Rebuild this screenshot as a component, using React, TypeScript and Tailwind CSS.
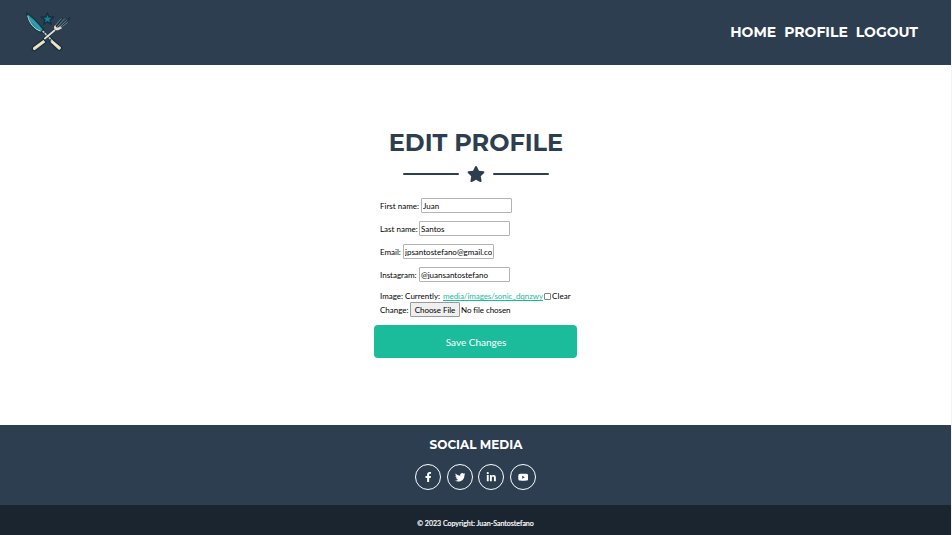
import React from "react";
import { FaFacebookF, FaTwitter, FaLinkedinIn, FaYoutube, FaStar } from "react-icons/fa";

const heading = "font-['Montserrat','Inter',sans-serif] font-bold whitespace-nowrap";

function Logo() {
  return (
    <svg className="h-[70px] w-20" viewBox="0 0 240 210" fill="none">
      <g stroke="#14303e" strokeLinejoin="round">
        <path d="M50 39 C68 50 86 70 102 90 L95 98 C74 91 56 72 50 39Z" fill="#2593a3" strokeWidth="4" />
        <path d="M96 91 L135 130" strokeWidth="9" />
        <path d="M102 117 L137 88" strokeWidth="9" />
        <path d="M133 88 L158 53 M144 91 L180 53" strokeWidth="5" />
        <path d="M126 117 L155 141 Q155 152 145 151 L118 126Z" fill="#e8dac0" strokeWidth="4" />
        <path d="M101 117 L68 141 Q64 150 74 153 L109 127Z" fill="#e8dac0" strokeWidth="4" />
        <path d="M112 39 L117 51 L131 51 L120 60 L124 73 L112 65 L101 73 L105 60 L94 51 L108 51Z" fill="#1b7c97" strokeWidth="4" />
      </g>
      <path d="M53 47 C58 69 71 86 91 93" stroke="#c5dfd8" strokeWidth="3" />
      <path d="M59 55 C71 67 80 77 92 88" stroke="#35b5c0" strokeWidth="3" />
      <path d="M98 93 L127 123" stroke="#c8cbc1" strokeWidth="5" strokeDasharray="7 2" />
      <path d="M103 117 L135 90" stroke="#e8e0cf" strokeWidth="5" />
      <path d="M132 80 Q131 92 145 91 L156 85 L151 79 L143 83 L138 81 L136 75Z" fill="#e8dec9" />
      <path d="M135 78 L155 55 M140 82 L164 56 M146 84 L172 60 M151 84 L173 67" stroke="#9fb1b1" strokeWidth="1.8" />
      <path d="M127 125 L147 143 M99 125 L74 144" stroke="#f3e4c8" strokeWidth="4" />
    </svg>
  );
}

function Field({ label, value, labelWidth }: { label: string; value: string; labelWidth: string }) {
  return (
    <label className="flex h-[15px] items-center">
      <span className={labelWidth}>{label}</span>
      <input
        defaultValue={value}
        className="h-[15px] w-[91px] rounded-[1px] border border-[#b3b3b3] bg-white px-[1px] text-[8px] text-black outline-none"
      />
    </label>
  );
}

const socials = [FaFacebookF, FaTwitter, FaLinkedinIn, FaYoutube];

export default function App() {
  return (
    <div className="h-[535px] w-full overflow-hidden bg-[#f4f4f5] font-['Lato',sans-serif]">
      <div className="flex h-full w-[951px] flex-col bg-white">
        <header className="flex h-[65px] shrink-0 items-start justify-between bg-[#2c3e50] pl-[10px] pr-[33px]">
          <Logo />
          <nav className={`${heading} flex gap-2 pt-[22px] text-[14px] leading-5 text-white`}>
            <a>HOME</a>
            <a>PROFILE</a>
            <a>LOGOUT</a>
          </nav>
        </header>

        <main className="flex h-[360px] shrink-0 flex-col items-center pt-[63px]">
          <h1 className={`${heading} pl-px text-[24px] leading-[30px] text-[#2c3e50]`}>EDIT PROFILE</h1>
          <div className="mt-[8px] flex h-4 items-center gap-2 text-[#2c3e50]">
            <span className="h-[2px] w-14 rounded-full bg-current" />
            <FaStar className="h-4 w-[18px]" />
            <span className="h-[2px] w-14 rounded-full bg-current" />
          </div>
          <form className="mt-4 w-[203px] text-[8px] leading-[12px] text-black">
            <div className="flex flex-col gap-2 whitespace-nowrap pl-[6px]">
              <Field label="First name:" value="Juan" labelWidth="w-[41px]" />
              <Field label="Last name:" value="Santos" labelWidth="w-[39px]" />
              <Field label="Email:" value="jpsantostefano@gmail.com" labelWidth="w-[23px]" />
              <Field label="Instagram:" value="@juansantostefano" labelWidth="w-[39px]" />
            </div>
            <div className="mt-2 flex h-3 items-center whitespace-nowrap pl-[6px]">
              <span className="w-[63px]">Image: Currently:</span>
              <a className="w-[100px] tracking-[-0.07px] text-[#1abc9c] underline">media/images/sonic_dqnzwy</a>
              <span className="ml-[1px] mr-[1px] h-[7px] w-[7px] rounded-[1px] border border-[#858585]" />
              <span className="tracking-[0.1px]">Clear</span>
            </div>
            <div className="flex h-[15px] items-center whitespace-nowrap pl-[6px]">
              <span className="w-[30px]">Change:</span>
              <button type="button" className="mr-[1px] h-[15px] w-[50px] rounded-[1px] border border-[#999] bg-[#efefef] leading-3 tracking-[-0.05px]">
                Choose File
              </button>
              <span className="tracking-[-0.07px]">No file chosen</span>
            </div>
            <button type="button" className="mt-2 block h-[33px] w-full rounded-[4px] bg-[#1abc9c] pl-px pt-px text-[10px] text-white">
              Save Changes
            </button>
          </form>
        </main>

        <footer className="flex h-20 shrink-0 flex-col items-center bg-[#2c3e50] pt-3 text-white">
          <h2 className={`${heading} pl-px text-[12px] leading-4`}>SOCIAL MEDIA</h2>
          <div className="mt-[11px] flex gap-[5.5px]">
            {socials.map((Icon, i) => (
              <a key={i} className="flex h-[26px] w-[26px] items-center justify-center rounded-full border border-white">
                <Icon className="h-[10.5px] w-auto" />
              </a>
            ))}
          </div>
        </footer>
        <div className="flex h-[30px] shrink-0 items-center justify-center bg-[#1a252f] pt-[6px] text-[7px] text-white [-webkit-text-stroke:0.2px_white]">
          © 2023 Copyright: Juan-Santostefano
        </div>
      </div>
    </div>
  );
}
